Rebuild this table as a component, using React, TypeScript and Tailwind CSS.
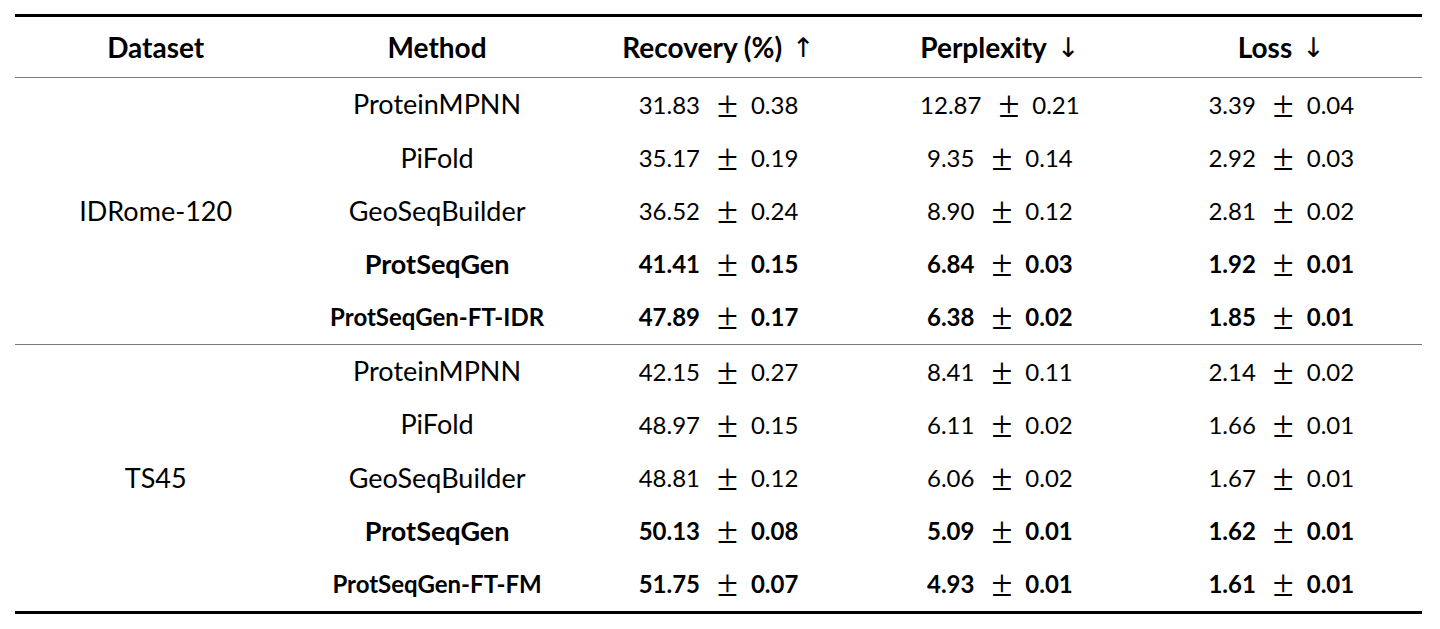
import React from "react";

type Row = { m: string; r: [string, string]; p: [string, string]; l: [string, string]; bold?: boolean; small?: boolean };

const groups: { name: string; rows: Row[] }[] = [
  {
    name: "IDRome-120",
    rows: [
      { m: "ProteinMPNN", r: ["31.83", "0.38"], p: ["12.87", "0.21"], l: ["3.39", "0.04"] },
      { m: "PiFold", r: ["35.17", "0.19"], p: ["9.35", "0.14"], l: ["2.92", "0.03"] },
      { m: "GeoSeqBuilder", r: ["36.52", "0.24"], p: ["8.90", "0.12"], l: ["2.81", "0.02"] },
      { m: "ProtSeqGen", r: ["41.41", "0.15"], p: ["6.84", "0.03"], l: ["1.92", "0.01"], bold: true },
      { m: "ProtSeqGen-FT-IDR", r: ["47.89", "0.17"], p: ["6.38", "0.02"], l: ["1.85", "0.01"], bold: true, small: true },
    ],
  },
  {
    name: "TS45",
    rows: [
      { m: "ProteinMPNN", r: ["42.15", "0.27"], p: ["8.41", "0.11"], l: ["2.14", "0.02"] },
      { m: "PiFold", r: ["48.97", "0.15"], p: ["6.11", "0.02"], l: ["1.66", "0.01"] },
      { m: "GeoSeqBuilder", r: ["48.81", "0.12"], p: ["6.06", "0.02"], l: ["1.67", "0.01"] },
      { m: "ProtSeqGen", r: ["50.13", "0.08"], p: ["5.09", "0.01"], l: ["1.62", "0.01"], bold: true },
      { m: "ProtSeqGen-FT-FM", r: ["51.75", "0.07"], p: ["4.93", "0.01"], l: ["1.61", "0.01"], bold: true, small: true },
    ],
  },
];

function Pm() {
  return (
    <span className="ml-[17px] mr-[13px] inline-block font-['Liberation_Serif',serif] font-normal text-[38px] leading-[0px] translate-y-[3px]">
      ±
    </span>
  );
}

function Val({ v, bold }: { v: [string, string]; bold?: boolean }) {
  return (
    <div
      className={
        bold
          ? "h-[53.2px] flex items-center justify-center font-bold text-[24px]"
          : "h-[53.2px] flex items-center justify-center text-[24px]"
      }
    >
      <div className="flex items-baseline">
        <span>{v[0]}</span>
        <Pm />
        <span>{v[1]}</span>
      </div>
    </div>
  );
}

function Arrow({ c }: { c: string }) {
  return <span className="ml-[10px] font-['DejaVu_Sans',sans-serif] font-normal text-[27px] leading-none">{c}</span>;
}

export default function App() {
  return (
    <div className="w-[1440px] h-[629px] bg-white text-black pt-[14px] pl-[15px] font-['Lato',sans-serif] text-[27px]">
      <div className="w-[1407px]">
        <div className="h-[3px] bg-black" />
        <div className="grid grid-cols-5 h-[60px] items-center text-center font-bold text-[28px]">
          <div>Dataset</div>
          <div>Method</div>
          <div className="flex items-center justify-center">
            <span>Recovery (%)</span>
            <Arrow c="↑" />
          </div>
          <div className="flex items-center justify-center">
            <span>Perplexity</span>
            <Arrow c="↓" />
          </div>
          <div className="flex items-center justify-center">
            <span>Loss</span>
            <Arrow c="↓" />
          </div>
        </div>
        {groups.map((g, gi) => (
          <div key={g.name}>
            <div className="h-px bg-[#7a7a7a]" />
            <div className="grid grid-cols-5">
              <div className="row-span-5 flex items-center justify-center">{g.name}</div>
              {g.rows.map((r) => (
                <React.Fragment key={r.m}>
                  <div
                    className={
                      r.small
                        ? "h-[53.2px] flex items-center justify-center font-bold text-[24px]"
                        : r.bold
                        ? "h-[53.2px] flex items-center justify-center font-bold"
                        : "h-[53.2px] flex items-center justify-center"
                    }
                  >
                    {r.m}
                  </div>
                  <Val v={r.r} bold={r.bold} />
                  <Val v={r.p} bold={r.bold} />
                  <Val v={r.l} bold={r.bold} />
                </React.Fragment>
              ))}
            </div>
            {gi === groups.length - 1 && <div className="h-[3px] bg-black" />}
          </div>
        ))}
      </div>
    </div>
  );
}
